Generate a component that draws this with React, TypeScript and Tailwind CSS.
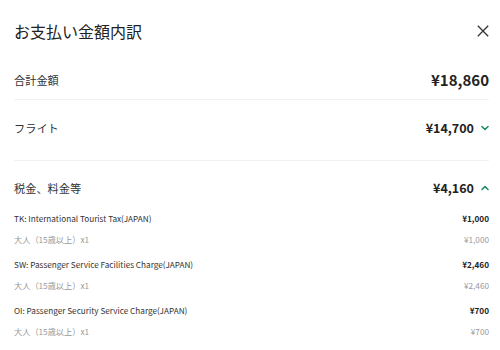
import React from "react";

const font = { fontFamily: '"Noto Sans CJK JP", "Noto Sans", sans-serif' };

function ChevronDown() {
  return (
    <svg width="8" height="6" viewBox="0 0 8 6" className="block">
      <path d="M1 1.5 L4 4.5 L7 1.5" fill="none" stroke="#16896a" strokeWidth="1.5" strokeLinecap="round" strokeLinejoin="round" />
    </svg>
  );
}

function ChevronUp() {
  return (
    <svg width="8" height="6" viewBox="0 0 8 6" className="block">
      <path d="M1 4.5 L4 1.5 L7 4.5" fill="none" stroke="#16896a" strokeWidth="1.5" strokeLinecap="round" strokeLinejoin="round" />
    </svg>
  );
}

const items = [
  { name: "TK: International Tourist Tax(JAPAN)", amount: "¥1,000" },
  { name: "SW: Passenger Service Facilities Charge(JAPAN)", amount: "¥2,460" },
  { name: "OI: Passenger Security Service Charge(JAPAN)", amount: "¥700" },
];

export default function App() {
  return (
    <div className="w-[500px] h-[350px] bg-white overflow-hidden text-[#222]" style={font}>
      <div className="h-[62px] flex items-center justify-between pl-[14px] pr-[11px]">
        <div className="text-[16px] text-[#222]">お支払い金額内訳</div>
        <svg width="12" height="12" viewBox="0 0 12 12" className="block mr-[0.5px]">
          <path d="M0.8 0.8 L11.2 11.2 M11.2 0.8 L0.8 11.2" stroke="#333" strokeWidth="1.3" />
        </svg>
      </div>
      <div className="ml-[14px] mr-[11px]">
        <div className="h-[38px] flex items-center justify-between border-b border-[#f1f3f2]">
          <div className="text-[11.2px] text-[#333]">合計金額</div>
          <div className="text-[15px] font-bold text-[#222]">¥18,860</div>
        </div>
        <div className="h-[61px] pb-[4px] flex items-center justify-between border-b border-[#f1f3f2]">
          <div className="text-[11.2px] text-[#333]">フライト</div>
          <div className="flex items-center gap-[7px]">
            <div className="text-[12.5px] font-bold text-[#222]">¥14,700</div>
            <ChevronDown />
          </div>
        </div>
        <div className="h-[16px] mt-[19px] flex items-center justify-between">
          <div className="text-[11.2px] text-[#333]">税金、料金等</div>
          <div className="flex items-center gap-[7px]">
            <div className="text-[12.5px] font-bold text-[#222]">¥4,160</div>
            <ChevronUp />
          </div>
        </div>
        <div className="mt-[11px] flex flex-col gap-[3px]">
          {items.map((it) => (
            <div key={it.name} className="flex flex-col">
              <div className="h-[22px] flex items-center justify-between">
                <div className="text-[8.2px] text-[#333]">{it.name}</div>
                <div className="text-[8.2px] font-bold text-[#222]">{it.amount}</div>
              </div>
              <div className="h-[21px] flex items-center justify-between">
                <div className="text-[8.2px] text-[#999]">大人（15歳以上）x1</div>
                <div className="text-[8.2px] text-[#999]">{it.amount}</div>
              </div>
            </div>
          ))}
        </div>
      </div>
    </div>
  );
}
